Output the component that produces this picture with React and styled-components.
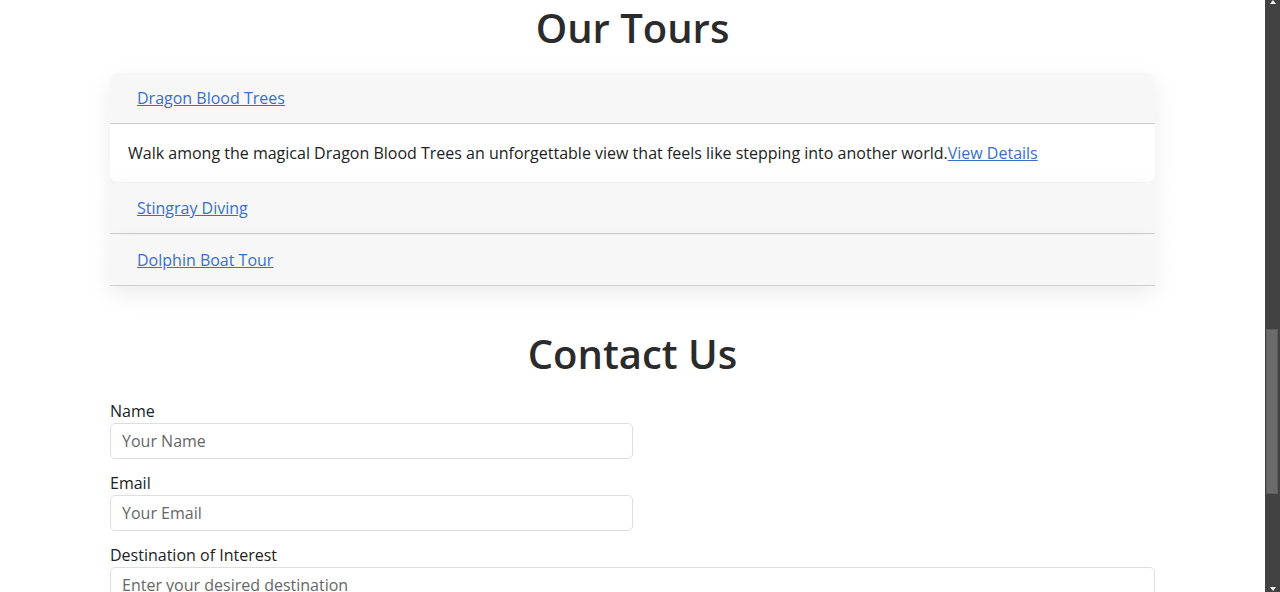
import React from "react";
import styled, { createGlobalStyle } from "styled-components";

const GlobalStyle = createGlobalStyle`
  html, body {
    margin: 0;
    background: #ffffff;
  }
  body {
    color: #222222;
    font-family: "Open Sans", "Noto Sans", "Liberation Sans", sans-serif;
    font-size: 16px;
  }
  * { box-sizing: border-box; }
`;

const Page = styled.div`
  display: flex;
  height: 100vh;
  overflow: hidden;
`;

const Main = styled.main`
  flex: 1;
  min-width: 0;
  overflow: hidden;
`;

const ScrollBar = styled.div`
  width: 15px;
  flex-shrink: 0;
  background: #424242;
  display: flex;
  flex-direction: column;
  align-items: center;
`;

const Arrow = styled.div`
  width: 0;
  height: 0;
  border-left: 3px solid transparent;
  border-right: 3px solid transparent;
  ${(p) =>
    p.$down
      ? "border-top: 4px solid #f2f2f2; margin-bottom: 1px;"
      : "border-bottom: 4px solid #f2f2f2; margin-top: 0;"}
`;

const Track = styled.div`
  flex: 1;
  width: 100%;
  display: flex;
  flex-direction: column;
  align-items: center;
`;

const Thumb = styled.div`
  width: 12px;
  margin-left: -1px;
  height: ${(p) => p.$size}px;
  margin-top: ${(p) => p.$offset}px;
  background: #6b6b6b;
  border: 1px solid #5c5c5c;
`;

const Container = styled.div`
  max-width: 1069px;
  margin: 0 auto;
  padding: 0 12px;
`;

const Section = styled.section`
  padding: ${(p) => p.$pt}px 0 ${(p) => p.$pb}px;
`;

const Heading = styled.h2`
  margin: 0 0 ${(p) => p.$mb}px;
  font-size: 40px;
  line-height: 48px;
  font-weight: 600;
  text-align: center;
  color: #2b2b2b;
`;

const Accordion = styled.div`
  display: flex;
  flex-direction: column;
  gap: 1px;
`;

const Item = styled.div`
  border-radius: ${(p) => (p.$open ? "8px" : "8px 8px 0 0")};
  overflow: hidden;
  background: #ffffff;
  box-shadow: 0 8px 24px rgba(0, 0, 0, 0.08);
`;

const ItemHeader = styled.div`
  height: 51px;
  display: flex;
  align-items: center;
  padding: 0 27px;
  background: #f7f7f7;
  border-bottom: 1px solid #cfcfcf;
`;

const TourLink = styled.a`
  color: #3a6fc9;
  text-decoration: underline;
  font-size: 16px;
`;

const ItemBody = styled.div`
  height: 58px;
  display: flex;
  align-items: center;
  padding: 0 18px;
  font-size: 16px;
  color: #222;
  background: #ffffff;
  white-space: nowrap;
`;

const Form = styled.form`
  display: flex;
  flex-direction: column;
`;

const Field = styled.div`
  width: ${(p) => (p.$half ? "50%" : "100%")};
  margin-bottom: 13px;
`;

const Label = styled.label`
  display: block;
  font-size: 16px;
  line-height: 22px;
  margin-bottom: 1px;
  color: #222;
`;

const Input = styled.input`
  display: block;
  width: 100%;
  height: 36px;
  padding: 0 11px;
  border: 1px solid #dedede;
  border-radius: 5px;
  font: inherit;
  font-size: 16px;
  color: #222;
  background: #fff;
  &::placeholder {
    color: #666;
  }
`;

const tours = [
  {
    name: "Dragon Blood Trees",
    open: true,
    text: "Walk among the magical Dragon Blood Trees an unforgettable view that feels like stepping into another world.",
  },
  { name: "Stingray Diving" },
  { name: "Dolphin Boat Tour" },
];

export default function App() {
  return (
    <>
      <GlobalStyle />
      <Page>
        <Main>
          <Section $pt={4} $pb={20}>
            <Container>
              <Heading $mb={21}>Our Tours</Heading>
              <Accordion>
                {tours.map((t) => (
                  <Item key={t.name} $open={t.open}>
                    <ItemHeader>
                      <TourLink href="#">{t.name}</TourLink>
                    </ItemHeader>
                    {t.open && (
                      <ItemBody>
                        {t.text}
                        <TourLink href="#">View Details</TourLink>
                      </ItemBody>
                    )}
                  </Item>
                ))}
              </Accordion>
            </Container>
          </Section>
          <Section $pt={24} $pb={0}>
            <Container>
              <Heading $mb={22}>Contact Us</Heading>
              <Form>
                <Field $half>
                  <Label>Name</Label>
                  <Input placeholder="Your Name" />
                </Field>
                <Field $half>
                  <Label>Email</Label>
                  <Input placeholder="Your Email" />
                </Field>
                <Field>
                  <Label>Destination of Interest</Label>
                  <Input placeholder="Enter your desired destination" />
                </Field>
              </Form>
            </Container>
          </Section>
        </Main>
        <ScrollBar>
          <Arrow />
          <Track>
            <Thumb $offset={325} $size={165} />
          </Track>
          <Arrow $down />
        </ScrollBar>
      </Page>
    </>
  );
}
